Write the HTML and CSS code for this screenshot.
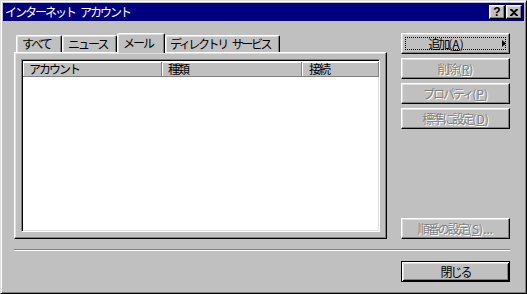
FILE: index.html
```html
<!DOCTYPE html>
<html lang="ja">
<head>
    <meta charset="UTF-8">
    <title>インターネット アカウント</title>
    <link rel="stylesheet" href="styles.css">
</head>
<body>
    <div class="window">
        <div class="titlebar">
            <span class="title">インターネット<span class="sp"> </span>アカウント</span>
            <div class="title-buttons">
                <span class="tbtn">?</span>
                <span class="tbtn">
                    <svg width="8" height="7" viewBox="0 0 8 7"><path d="M0 0h2l2 2 2-2h2v1L5 3.5 8 6v1H6L4 5 2 7H0V6l3-2.5L0 1z" fill="#000"/></svg>
                </span>
            </div>
        </div>

        <div class="content">
            <div class="main">
                <div class="tabs-area">
                    <div class="tabstrip">
                        <div class="tab tab-all">すべて</div>
                        <div class="tab tab-news">ニュース</div>
                        <div class="tab tab-mail active">メール</div>
                        <div class="tab tab-dir">ディレクトリ<span class="sp"> </span>サービス</div>
                    </div>
                    <div class="panel">
                        <div class="listview">
                            <div class="lv-header">
                                <div class="lv-col col-account">アカウント</div>
                                <div class="lv-col col-type">種類</div>
                                <div class="lv-col col-conn">接続</div>
                            </div>
                        </div>
                    </div>
                </div>

                <div class="side">
                    <button class="btn btn-menu focused">
                        <span class="label">追加<span class="latin">(<u>A</u>)</span></span>
                        <span class="arrow-box">
                            <svg width="4" height="7" viewBox="0 0 4 7"><path d="M0 0l4 3.5L0 7z" fill="#000"/></svg>
                        </span>
                    </button>
                    <button class="btn" disabled>削除<span class="latin">(<u>R</u>)</span></button>
                    <button class="btn" disabled>プロパティ<span class="latin">(<u>P</u>)</span></button>
                    <button class="btn" disabled>標準に設定<span class="latin">(<u>D</u>)</span></button>
                    <button class="btn side-last" disabled>順番の設定<span class="latin">(<u>S</u>)...</span></button>
                </div>
            </div>

            <div class="separator"></div>

            <div class="footer">
                <button class="btn btn-default">閉じる</button>
            </div>
        </div>
    </div>
</body>
</html>
```

FILE: styles.css
```css
* {
    margin: 0;
    padding: 0;
    box-sizing: border-box;
}
body {
    background-color: #c0c0c0;
    font-family: "Noto Sans CJK JP", "Noto Sans", sans-serif;
    font-size: 12px;
    letter-spacing: -2px;
    color: #000;
}
.latin {
    letter-spacing: 0;
}
.sp {
    display: inline-block;
    width: 5px;
}

/* Window frame */
.window {
    width: 527px;
    height: 294px;
    background-color: #c0c0c0;
    border: 1px solid;
    border-color: #dfdfdf #000 #000 #dfdfdf;
    box-shadow: inset 1px 1px #fff, inset -1px -1px #808080;
    padding: 2px;
    display: flex;
    flex-direction: column;
}
.titlebar {
    height: 18px;
    flex-shrink: 0;
    background-color: #000080;
    color: #fff;
    display: flex;
    align-items: center;
    justify-content: space-between;
    padding: 0 2px 0 2px;
}
.title {
    line-height: 18px;
}
.title-buttons {
    display: flex;
    gap: 1px;
}
.tbtn {
    width: 16px;
    height: 14px;
    display: flex;
    align-items: center;
    justify-content: center;
    background-color: #c0c0c0;
    color: #000;
    border: 1px solid;
    border-color: #fff #000 #000 #fff;
    box-shadow: inset -1px -1px #808080, inset 1px 1px #dfdfdf;
    font-family: "Liberation Sans", sans-serif;
    font-weight: bold;
    font-size: 12px;
    letter-spacing: 0;
    line-height: 1;
}

/* Body */
.content {
    flex: 1;
    padding: 12px 14px 0 11px;
}
.main {
    display: flex;
    gap: 14px;
}
.tabs-area {
    width: 373px;
    flex-shrink: 0;
}
.tabstrip {
    display: flex;
    height: 19px;
    padding-left: 2px;
    align-items: flex-end;
}
.tab {
    height: 17px;
    flex-shrink: 0;
    border: 1px solid;
    border-bottom: none;
    border-color: #fff #000 transparent #fff;
    border-radius: 2px 2px 0 0;
    box-shadow: inset -1px 0 #808080, inset 1px 1px #dfdfdf;
    padding-left: 5px;
    line-height: 15px;
    white-space: nowrap;
    overflow: hidden;
}
.tab-all { width: 46px; }
.tab-news { width: 55px; }
.tab-mail { width: 48px; }
.tab-dir {
    width: 115px;
    padding-left: 4px;
    letter-spacing: -2.4px;
}
.tab.active {
    height: 20px;
    margin-bottom: -1px;
    background-color: #c0c0c0;
    position: relative;
    z-index: 1;
    padding-top: 1px;
}

.panel {
    height: 187px;
    border: 1px solid;
    border-color: #fff #000 #000 #fff;
    box-shadow: inset -1px -1px #808080, inset 1px 1px #dfdfdf;
    padding: 6px 0 0 6px;
}
.listview {
    width: 359px;
    height: 173px;
    background-color: #fff;
    border: 1px solid;
    border-color: #808080 #fff #fff #808080;
    box-shadow: inset 1px 1px #000, inset -1px -1px #dfdfdf;
    padding: 2px 2px 2px 1px;
}
.lv-header {
    display: flex;
    height: 15px;
}
.lv-col {
    flex-shrink: 0;
    background-color: #c0c0c0;
    border-right: 1px solid #808080;
    border-bottom: 1px solid #808080;
    box-shadow: inset 1px 1px #fff;
    padding-left: 6px;
    line-height: 14px;
    white-space: nowrap;
}
.col-account { width: 139px; }
.col-type { width: 140px; }
.col-conn { width: 77px; padding-left: 7px; }

/* Buttons */
.side {
    width: 109px;
    flex-shrink: 0;
    display: flex;
    flex-direction: column;
    gap: 4px;
}
.side-last {
    margin-top: auto;
}
.btn {
    height: 21px;
    width: 109px;
    background-color: #c0c0c0;
    border: 1px solid;
    border-color: #fff #000 #000 #fff;
    box-shadow: inset -1px -1px #808080, inset 1px 1px #dfdfdf;
    font-family: inherit;
    font-size: 12px;
    letter-spacing: -2px;
    color: #000;
    line-height: 17px;
    text-align: center;
    white-space: nowrap;
}
.btn:disabled {
    color: #808080;
    text-shadow: 1px 1px 0 #fff;
}
.btn-menu {
    display: flex;
    align-items: center;
    padding: 0 3px 0 4px;
    position: relative;
}
.btn-menu .label {
    flex: 1;
    text-align: center;
}
.arrow-box {
    width: 20px;
    display: flex;
    justify-content: flex-end;
}
.focused::after {
    content: "";
    position: absolute;
    top: 3px;
    left: 3px;
    right: 3px;
    bottom: 3px;
    border: 1px dotted #000;
}
.btn-default {
    border-color: #000;
    box-shadow: inset 1px 1px #fff, inset -1px -1px #000, inset 2px 2px #dfdfdf, inset -2px -2px #808080;
}

.separator {
    margin-top: 10px;
    height: 2px;
    border-top: 1px solid #808080;
    border-bottom: 1px solid #fff;
}
.footer {
    display: flex;
    justify-content: flex-end;
    margin-top: 10px;
}
```
